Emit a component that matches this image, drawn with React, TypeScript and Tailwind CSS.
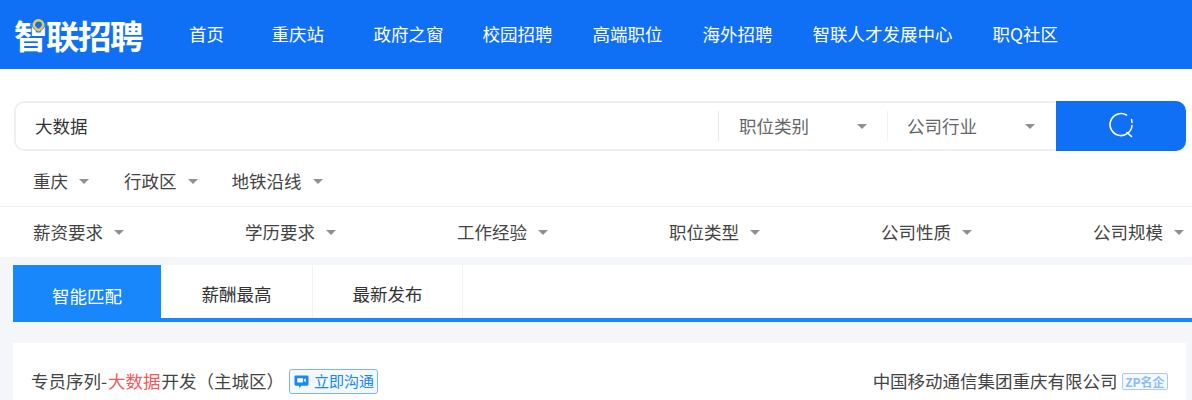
const navItems = [
  { label: '首页', className: 'w-[82.5px]' },
  { label: '重庆站', className: 'w-[102px]' },
  { label: '政府之窗', className: 'w-[109px]' },
  { label: '校园招聘', className: 'w-[110px]' },
  { label: '高端职位', className: 'w-[110px]' },
  { label: '海外招聘', className: 'w-[110px]' },
  { label: '智联人才发展中心', className: 'w-[180px]' },
  { label: '职Q社区', className: '' },
];

const locationFilters = [
  { label: '重庆', className: 'w-[91px]' },
  { label: '行政区', className: 'w-[107.5px]' },
  { label: '地铁沿线', className: '' },
];

const moreFilters = ['薪资要求', '学历要求', '工作经验', '职位类型', '公司性质', '公司规模'];

const Caret = ({ className = '' }: { className?: string }) => (
  <span className={`inline-block w-0 h-0 border-x-[5px] border-x-transparent border-t-[5px] border-t-[#8d9299] ${className}`} />
);

const Logo = () => (
  <div className="relative flex items-center w-[130px] h-[40px] text-[33.5px] leading-none font-bold text-white tracking-[-1.5px]">
    智联招聘
    {/* yellow map pin on the first glyph */}
    <svg className="absolute left-[18px] top-[3px]" width="13" height="15" viewBox="0 0 16 17">
      <path d="M8 0a8 8 0 0 1 8 8c0 4-4 6.500-8 9-4-2.500-8-5-8-9a8 8 0 0 1 8-8z" fill="#1070f5" />
      <path d="M8 2a5.800 5.800 0 0 1 5.800 5.800c0 2.800-3.300 5-5.800 6.700-2.500-1.700-5.800-3.900-5.800-6.700A5.800 5.800 0 0 1 8 2z" fill="none" stroke="#f2cc3c" strokeWidth="3" />
    </svg>
  </div>
);

export default function App() {
  return (
    <div className="w-[1192px] h-[400px] overflow-hidden bg-[#f4f6f9] text-[#444] font-['Noto_Sans_CJK_SC','Liberation_Sans',sans-serif]">
      <header className="h-[69px] bg-[#1070f5] flex items-center pl-[14px] text-white">
        <div className="w-[175px]">
          <Logo />
        </div>
        <nav className="flex items-center text-[17.5px] leading-none pb-[1px]">
          {navItems.map((item) => (
            <span key={item.label} className={`block whitespace-nowrap ${item.className}`}>
              {item.label}
            </span>
          ))}
        </nav>
      </header>

      <section className="bg-white h-[188px] pt-[32px]">
        <div className="flex h-[50px] w-[1172px] ml-[14px]">
          <div className="flex flex-1 items-center rounded-l-[10px] border-2 border-r-0 border-[#eeeff1]">
            <span className="flex-1 pl-[19px] text-[17.5px] text-[#333]">大数据</span>
            <div className="flex items-center w-[169px] h-[30px] border-l border-[#e8e9eb] pl-[20px] text-[17.5px] text-[#666]">
              <span className="w-[118px]">职位类别</span>
              <Caret />
            </div>
            <div className="flex items-center w-[169px] h-[30px] border-l border-[#f0f1f2] pl-[19px] text-[17.5px] text-[#666]">
              <span className="w-[118px]">公司行业</span>
              <Caret />
            </div>
          </div>
          <button className="flex items-center justify-center w-[130px] bg-[#1070f5] rounded-r-[10px] pb-[2px]">
            <svg width="28" height="28" viewBox="0 0 28 28" fill="none" stroke="#fff" strokeWidth="1.6" strokeLinecap="round">
              <path d="M19.500 4A11 11 0 1 0 25 14.500" />
              <path d="M20 21.500l4.500 4" />
              <path d="M24.600 8.500l.400 3" />
            </svg>
          </button>
        </div>

        <div className="flex items-center h-[55px] pt-[6px] pl-[33px] text-[17.5px] text-[#444]">
          {locationFilters.map((f) => (
            <span key={f.label} className={`flex items-center gap-[11px] whitespace-nowrap ${f.className}`}>
              {f.label}
              <Caret />
            </span>
          ))}
        </div>

        <div className="flex items-center h-[51px] pl-[33px] border-t border-[#f1f2f4] text-[17.5px] text-[#444]">
          {moreFilters.map((f) => (
            <span key={f} className="flex items-center gap-[10.5px] w-[212px] whitespace-nowrap shrink-0">
              {f}
              <Caret />
            </span>
          ))}
        </div>
      </section>

      <div className="flex ml-[13px] mt-[8px] h-[57px] bg-white border-b-[4px] border-[#1787fb] text-[17.5px]">
        <span className="flex items-center justify-center w-[148px] h-[57px] pt-[5px] bg-[#1787fb] text-white">智能匹配</span>
        <span className="flex items-center justify-center w-[152px] pt-[5px] border-r border-[#f1f2f4] text-[#333]">薪酬最高</span>
        <span className="flex items-center justify-center w-[150px] pt-[5px] border-r border-[#f1f2f4] text-[#333]">最新发布</span>
      </div>

      <div className="flex items-center justify-between ml-[13px] mr-[6px] mt-[21px] h-[80px] pl-[18px] pr-[18px] pb-[3px] bg-white">
        <div className="flex items-center text-[17.5px] text-[#444] whitespace-nowrap">
          专员序列-<span className="mx-[1px] text-[#f5575c]">大数据</span>开发（主城区）
          <span className="flex items-center gap-[5px] ml-[5px] h-[25px] pl-[4px] pr-[3px] rounded-[3px] border border-[#7db6ee] bg-[#f3f9ff] text-[15px] text-[#1787fb]">
            <svg width="15" height="15" viewBox="0 0 16 15">
              <path d="M2 1h12a1.500 1.500 0 0 1 1.500 1.500v8a1.500 1.500 0 0 1-1.500 1.500H8l-2.500 2.500V12H2A1.500 1.500 0 0 1 .5 10.500v-8A1.500 1.500 0 0 1 2 1z" fill="#1787fb" />
              <rect x="3.500" y="4" width="6" height="4.500" fill="#fff" />
              <path d="M10 6l2.500-2v4.500z" fill="#fff" />
            </svg>
            立即沟通
          </span>
        </div>
        <div className="flex items-center gap-[4px] text-[17.5px] text-[#444] whitespace-nowrap">
          中国移动通信集团重庆有限公司
          <span className="flex items-center h-[17px] px-[2.5px] rounded-[2px] border border-[#a9cdf2] bg-[#f3f9ff] text-[12px] font-bold leading-none text-[#8cbdf0]">
            ZP名企
          </span>
        </div>
      </div>
    </div>
  );
}
